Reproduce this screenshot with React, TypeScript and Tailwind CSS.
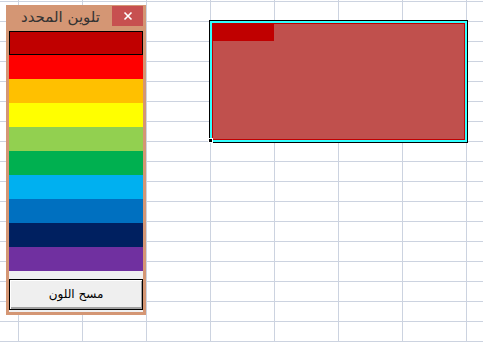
import React from "react";

const colors = [
  "bg-[#ff0000]",
  "bg-[#ffc000]",
  "bg-[#ffff00]",
  "bg-[#92d050]",
  "bg-[#00b050]",
  "bg-[#00b0f0]",
  "bg-[#0070c0]",
  "bg-[#002060]",
  "bg-[#7030a0]",
];

export default function App() {
  return (
    <div className="relative w-[483px] h-[342px] overflow-hidden bg-white bg-[linear-gradient(to_right,#ccd3e0_1px,transparent_1px),linear-gradient(to_bottom,#ccd3e0_1px,transparent_1px)] bg-[size:64px_20px] bg-[position:18px_1px]">
      {/* selection */}
      <div className="absolute left-[209px] top-[20px] w-[259px] h-[123px] border border-black">
        <div className="w-full h-full border-2 border-[#33ffff]">
          <div className="w-full h-full bg-[#c0504d] shadow-[inset_0_0_0_1px_#c00000]">
            <div className="w-[62px] h-[18px] bg-[#c00000]" />
          </div>
        </div>
      </div>
      <div className="absolute left-[208px] top-[138px] w-[5px] h-[5px] bg-black border border-white">
        <div className="w-full h-full bg-black" />
      </div>

      {/* dialog */}
      <div className="absolute left-[6px] top-[5px] w-[140px] h-[310px] bg-[#d49674] flex flex-col">
        <div className="h-[26px] flex pr-[3px]">
          <div
            dir="rtl"
            className="flex-1 flex items-center justify-center pl-[3px] text-[15px] text-[#333333] leading-none pb-[1px] font-['DejaVu_Sans',sans-serif]"
          >
            تلوين المحدد
          </div>
          <div className="w-[31px] h-[20px] mt-[1px] bg-[#c75050] flex items-center justify-center">
            <svg width="10" height="10" viewBox="0 0 10 10">
              <path d="M1.5 1.5 L8.5 8.5 M8.5 1.5 L1.5 8.5" stroke="white" strokeWidth="1.6" />
            </svg>
          </div>
        </div>
        <div className="mx-[3px] h-[281px] bg-[#f0f0f0] flex flex-col">
          <div className="h-[24px] bg-[#c00000] border border-black" />
          {colors.map((c) => (
            <div key={c} className={`h-[24px] ${c}`} />
          ))}
          <div className="h-[8px]" />
          <div className="h-[31px] border border-black bg-[#efefef] shadow-[inset_1px_1px_#ffffff,inset_-1px_-2px_#a0a0a0] flex items-center justify-center">
            <span dir="rtl" className="text-[12px] text-black font-['DejaVu_Sans',sans-serif] leading-none pb-[1px]">
              مسح اللون
            </span>
          </div>
        </div>
      </div>
    </div>
  );
}
